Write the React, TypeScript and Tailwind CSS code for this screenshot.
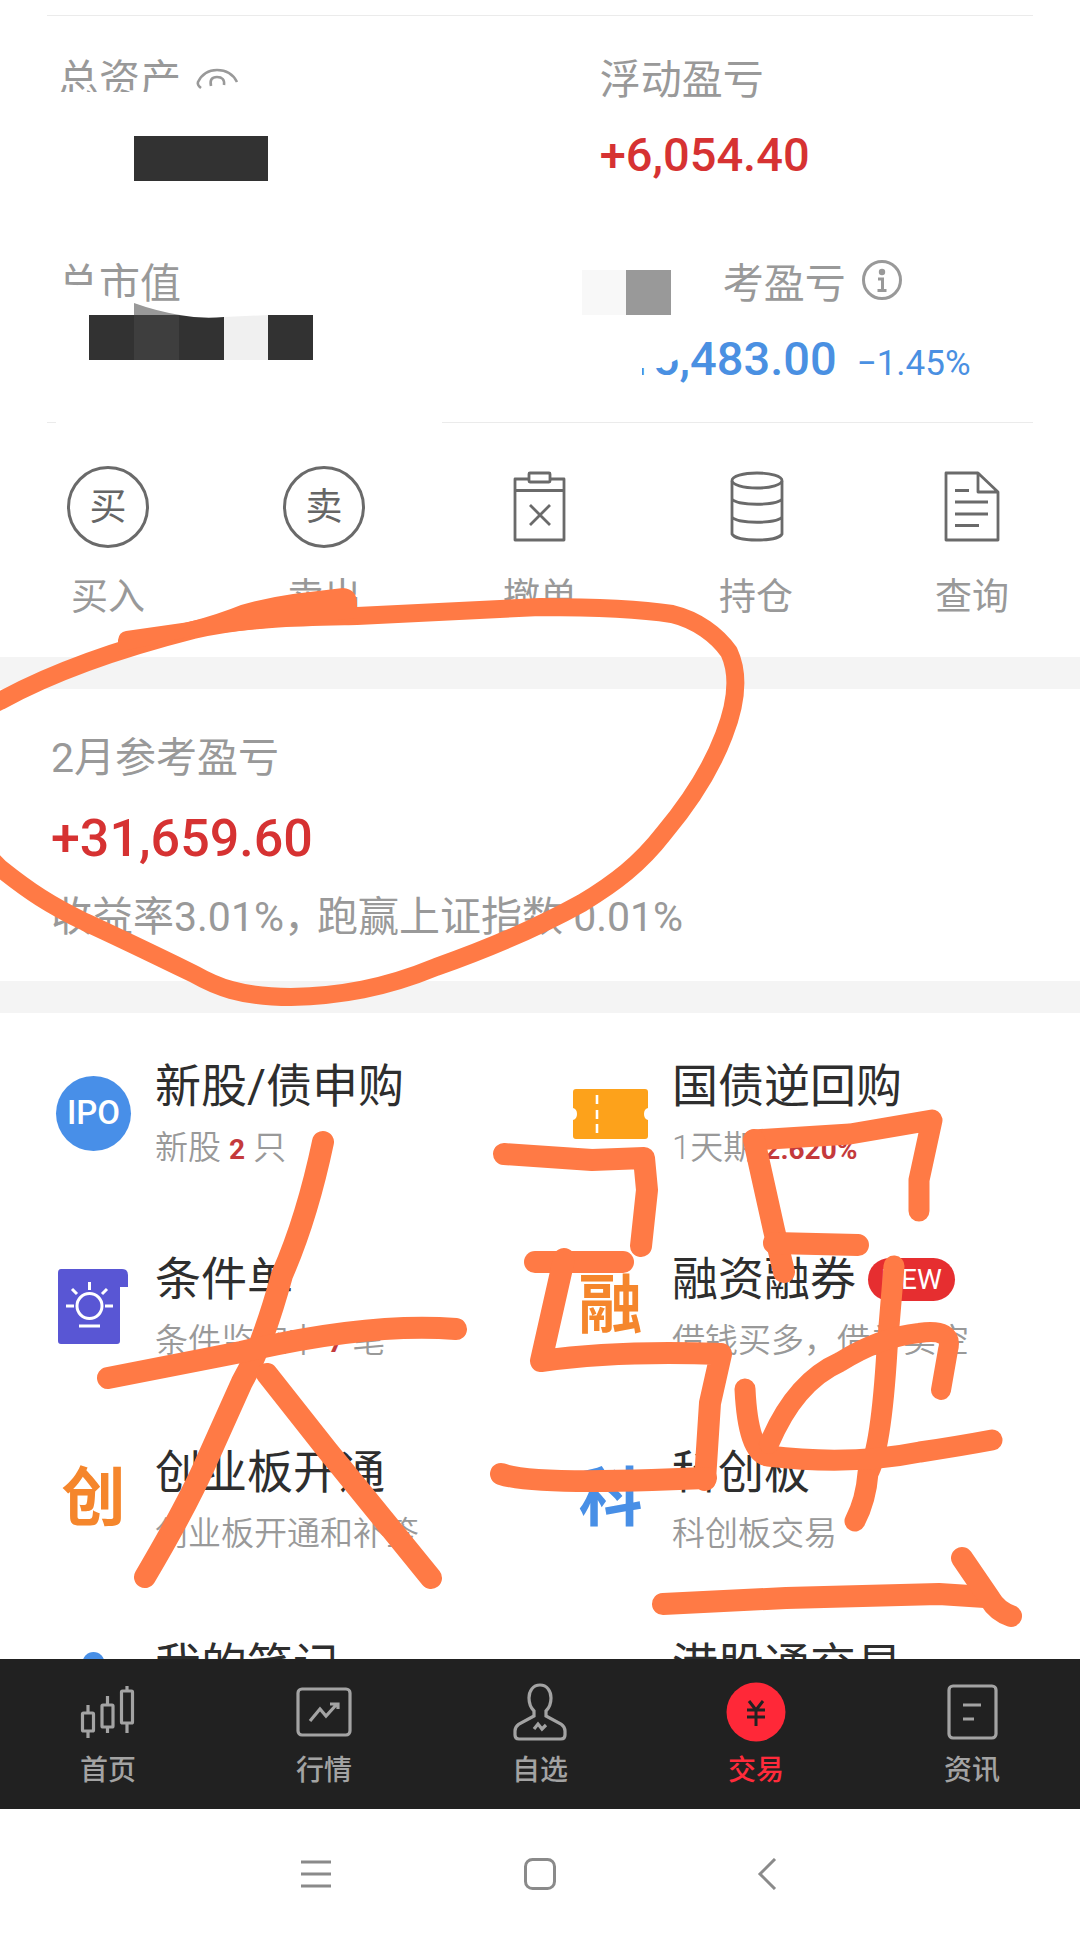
import type { ReactNode } from "react";

const BuyIcon = ({ char }: { char: string }) => (
  <span className="flex h-[82px] w-[82px] items-center justify-center rounded-full border-[3px] border-[#6a6a6a] text-[37px] leading-none text-[#666]">
    {char}
  </span>
);

const CancelIcon = () => (
  <svg className="h-[82px] w-[82px]" viewBox="0 0 82 82" fill="none" stroke="#6a6a6a" strokeWidth="2.8" strokeLinejoin="round">
    <path d="M30 13H16v61h49V13H51M16 24.500h49" />
    <rect x="30" y="7" width="21" height="9" rx="1" />
    <path d="M31 39l20 20M51 39L31 59" />
  </svg>
);

const HoldingIcon = () => (
  <svg className="h-[82px] w-[82px]" viewBox="0 0 82 82" fill="none" stroke="#6a6a6a" strokeWidth="2.8">
    <ellipse cx="42" cy="14.500" rx="25" ry="7.500" />
    <path d="M17 15v53c4 8 46 8 50 0V15M17 33c5 7 45 7 50 0M17 51c5 7 45 7 50 0" />
  </svg>
);

const QueryIcon = () => (
  <svg className="h-[82px] w-[82px]" viewBox="0 0 82 82" fill="none" stroke="#6a6a6a" strokeWidth="2.8" strokeLinejoin="round">
    <path d="M47 7H15v67h52V26zM47 7v19h20" />
    <path d="M24 24.500h14M24 36h33M24 48h33M24 59.500h24" />
  </svg>
);

const EyeIcon = () => (
  <svg className="h-6 w-11" viewBox="0 2 44 24" fill="none" stroke="#999" strokeWidth="2.6">
    <path d="M6 22q-4-3-3-6Q9 4 22 4q14 0 20 12" />
    <path d="M16 20q-2-9 6-9t7 8" />
  </svg>
);

const InfoIcon = () => (
  <svg className="h-10 w-10" viewBox="0 0 40 40" fill="none" stroke="#999" strokeWidth="3">
    <circle cx="20" cy="20" r="18.500" />
    <circle cx="20" cy="12" r="3.200" fill="#999" stroke="none" />
    <path d="M16 19h4.500v11M15.500 30.500h9" strokeWidth="3" />
  </svg>
);

const ConditionIcon = () => (
  <svg className="h-[75px] w-[75px]" viewBox="0 0 75 75" fill="none" stroke="#fff" strokeWidth="3">
    <path d="M5 0h61q6 0 6 6v12h-8v54q0 3-3 3H5q-3 0-3-3V4q0-4 3-4z" fill="#5956d4" stroke="none" />
    <circle cx="33.500" cy="37" r="12.500" />
    <path d="M33.500 13v8M10 37h8M49 37h8M16 20l5 5M51 20l-5 5M23 57h21" />
  </svg>
);

const TicketIcon = () => (
  <svg className="h-[75px] w-[75px]" viewBox="0 0 75 75">
    <path
      d="M3 13h69q3 0 3 3v16q-4 1-4 6t4 6v16q0 3-3 3H3q-3 0-3-3V44q4-1 4-6t-4-6V16q0-3 3-3z"
      fill="#fda21b"
    />
    <path d="M24 19v9M24 34v9M24 48v9" stroke="#fff" strokeWidth="2.6" />
  </svg>
);

const NoteIcon = () => (
  <svg className="h-[75px] w-[75px] overflow-visible" viewBox="0 0 75 75">
    <circle cx="37.500" cy="8" r="11" fill="#488fe6" />
    <path d="M12 66q4-38 25-38t26 38z" fill="#488fe6" />
  </svg>
);

const actions: { label: string; icon: ReactNode }[] = [
  { label: "买入", icon: <BuyIcon char="买" /> },
  { label: "卖出", icon: <BuyIcon char="卖" /> },
  { label: "撤单", icon: <CancelIcon /> },
  { label: "持仓", icon: <HoldingIcon /> },
  { label: "查询", icon: <QueryIcon /> },
];

type Feature = {
  title: string;
  desc?: ReactNode;
  icon?: ReactNode;
  isNew?: boolean;
};

const Num = ({ children }: { children: ReactNode }) => (
  <b className="text-[28px] font-bold leading-none text-[#c43a3c]">{children}</b>
);

const features: Feature[] = [
  {
    title: "新股/债申购",
    desc: <>新股 <Num>2</Num> 只</>,
    icon: (
      <span className="flex h-[75px] w-[75px] items-center justify-center rounded-full bg-[#488fe8] text-[33px] font-medium text-white">
        IPO
      </span>
    ),
  },
  {
    title: "国债逆回购",
    desc: <>1天期 <Num>2.620%</Num></>,
    icon: <TicketIcon />,
  },
  {
    title: "条件单",
    desc: <>条件监控中 <Num>7</Num> 笔</>,
    icon: <ConditionIcon />,
  },
  {
    title: "融资融券",
    desc: "借钱买多，借券卖空",
    icon: <span className="text-[64px] font-bold leading-none text-[#f5862c]">融</span>,
    isNew: true,
  },
  {
    title: "创业板开通",
    desc: "创业板开通和补签",
    icon: <span className="text-[64px] font-bold leading-none text-[#f5862c]">创</span>,
  },
  {
    title: "科创板",
    desc: "科创板交易",
    icon: <span className="text-[64px] font-bold leading-none text-[#488fe6]">科</span>,
  },
  { title: "我的笔记", icon: <NoteIcon /> },
  { title: "港股通交易" },
];

const tabs: { label: string; active?: boolean; icon: ReactNode }[] = [
  {
    label: "首页",
    icon: (
      <>
        <rect x="4.500" y="31" width="11" height="18" rx="1" />
        <rect x="24" y="23" width="11" height="22" rx="1" />
        <rect x="43.500" y="9" width="11" height="32" rx="1" />
        <path d="M10 23v8M10 49v7M29.500 14v9M29.500 45v6M49 4v5M49 41v10" />
      </>
    ),
  },
  {
    label: "行情",
    icon: (
      <>
        <rect x="4" y="7" width="52" height="46" rx="4" />
        <path d="M16 39l10-12 6 7 11-12M36 22h8v5" />
      </>
    ),
  },
  {
    label: "自选",
    icon: (
      <>
        <path d="M30 3c-7 0-11 6-11 13 0 6 2 10 5 13v5L9 42q-4 3-4 7v4q0 4 4 4h42q4 0 4-4v-4q0-4-4-7l-15-8v-5c3-3 5-7 5-13 0-7-4-13-11-13z" />
        <path d="M24 47l4-5 4 5 4-4" />
      </>
    ),
  },
  {
    label: "交易",
    active: true,
    icon: (
      <>
        <circle cx="30" cy="30" r="29.500" fill="#ff2838" stroke="none" />
        <path d="M23 19l7 9 7-9M21 28h18M21 35h18M30 28v16" stroke="#222" strokeWidth="3" />
      </>
    ),
  },
  {
    label: "资讯",
    icon: (
      <>
        <rect x="7" y="4" width="47" height="52" rx="4" />
        <path d="M21 23h18M21 37h11" />
      </>
    ),
  },
];

// Mosaic, eraser and pen strokes drawn on top of the screen.
function Markup() {
  return (
    <svg
      className="pointer-events-none absolute inset-0 h-full w-full"
      viewBox="0 0 1080 1939"
      preserveAspectRatio="none"
      fill="none"
      aria-hidden="true"
    >
      <g fill="#fff">
        <path d="M50 92h140v14H50zM55 284l38 2 8 8 12 4h28v14H55zM56 420h386v8H56z" />
        <path d="M590 335h96v21l-8 3-18 9h-18v20h-52z" />
      </g>
      <path d="M134 136h134v45H134zM89 315h45v45H89zM179 315q22 4 45 2v43h-45zM268 315h45v45h-45z" fill="#323232" />
      <path d="M134 303q22 8 46 12h-46z" fill="#999" />
      <path d="M134 315h45v45h-45z" fill="#3e3e3e" />
      <path d="M224 317l44-2v45h-44z" fill="#f0f0f0" />
      <path d="M582 270h44v45h-44z" fill="#f8f8f8" />
      <path d="M626 270h45v45h-45z" fill="#999" />

      <g stroke="#ff7a45" strokeLinecap="round" strokeLinejoin="round">
        <path
          strokeWidth="18"
          d="M-10 706L0 701C60 668 130 646 193 630C250 617 310 617 357 616L540 607C600 607 640 609 672 614C697 620 717 635 729 652C742 680 733 712 724 735C710 772 690 802 664 833C640 864 615 883 582 903C535 929 490 948 436 967C385 988 340 996 291 997C240 997 215 986 194 974C155 955 120 938 85 922C50 905 30 892 0 868L-10 858"
        />
        <path
          fill="#ff7a45"
          stroke="none"
          d="M118 652v-12q1-8 8-9l63-9q30-8 52-17 24-7 52-11l50-6q14 1 14 16v14l-164 18z"
        />
        <g strokeWidth="22">
          <path d="M323 1142Q307 1218 282 1275Q263 1345 242 1382L207 1460Q188 1504 145 1577" />
          <path d="M108 1378L241 1352Q370 1322 456 1329" />
          <path d="M267 1374L327 1450L431 1578" />
          <path d="M504 1154L592 1160L644 1158L647 1190L641 1246" />
          <path d="M535 1262L623 1262" />
          <path d="M564 1259L541 1361Q620 1350 721 1354L710 1403L705 1480" />
          <path d="M501 1474Q530 1484 652 1480L706 1478" />
          <path d="M754 1140L850 1134L932 1120L919 1180L919 1211" strokeWidth="21" />
          <path d="M754 1140L774 1230L784 1272" />
          <path d="M774 1243L858 1245" />
          <path d="M894 1266L887 1350Q881 1450 868 1473Q866 1500 855 1521" strokeWidth="21" />
          <path d="M745 1389Q748 1452 768 1456Q850 1466 920 1452Q960 1446 992 1440" strokeWidth="21" />
          <path d="M769 1444Q795 1382 840 1362Q880 1337 919 1333Q954 1328 948 1350L941 1390" strokeWidth="20" />
          <path d="M663 1604L786 1598L939 1594L985 1597" />
          <path d="M962 1558L990 1599Q997 1611 1011 1616" />
        </g>
      </g>
    </svg>
  );
}

export default function App() {
  return (
    <div className="relative flex h-screen flex-col overflow-hidden bg-white pt-[15px] font-['Roboto','Noto_Sans_CJK_SC',sans-serif] text-[#999]">
      <section className="mx-[47px] grid shrink-0 grid-cols-[5fr_4fr] gap-y-[73px] border-y border-[#ebebeb] pt-10 pb-[33px] pl-[11px] text-[41px] leading-[48px]">
        <div className="flex h-12 items-center gap-3.5">
          总资产
          <button type="button" aria-label="显示资产">
            <EyeIcon />
          </button>
        </div>
        <div>
          <div>浮动盈亏</div>
          <div className="mt-[21px] text-[47px] font-medium leading-[60px] text-[#d63232]">
            +6,054.40
          </div>
        </div>
        <div className="pt-0.5">总市值</div>
        <div className="pt-0.5">
          <div className="flex items-start gap-4 pl-[123px]">
            考盈亏
            <button type="button" aria-label="说明">
              <InfoIcon />
            </button>
          </div>
          <div className="mt-[21px] flex items-baseline gap-5 text-[47px] leading-[60px] text-[#4a90e2]">
            <span className="font-medium">−15,483.00</span>
            <span className="text-[35px] leading-10">−1.45%</span>
          </div>
        </div>
      </section>

      <section className="grid shrink-0 grid-cols-5 pt-[43px] pb-[35px]">
        {actions.map((a) => (
          <button
            key={a.label}
            type="button"
            className="flex flex-col items-center gap-[26px] text-[37px] leading-[48px]"
          >
            {a.icon}
            {a.label}
          </button>
        ))}
      </section>

      <div className="h-8 shrink-0 bg-[#f4f4f4]" />

      <section className="shrink-0 px-[51px] pt-[45px] pb-10 text-[41px] leading-[48px]">
        <div>2月参考盈亏</div>
        <div className="mt-[27px] text-[52px] font-medium leading-[60px] text-[#d63232]">
          +31,659.60
        </div>
        <div className="mt-6 flex whitespace-nowrap">
          <span className="w-[266px]">收益率3.01%，</span>
          <span>跑赢上证指数 0.01%</span>
        </div>
      </section>

      <div className="h-8 shrink-0 bg-[#f4f4f4]" />

      <section className="grid min-h-0 flex-1 grid-cols-2 content-start gap-x-10 gap-y-[83px] overflow-hidden pt-[45px] pr-[30px] pl-14">
        {features.map((f) => (
          <a key={f.title} href="#" className="flex items-center gap-6 whitespace-nowrap">
            <span className="flex h-[75px] w-[75px] shrink-0 items-center justify-center">
              {f.icon}
            </span>
            <span className="flex h-[110px] flex-col gap-3.5">
              <span className="flex items-center gap-3 text-[46px] leading-[56px] text-[#2e2e2e]">
                {f.title}
                {f.isNew && (
                  <span className="rounded-full bg-[#e62e30] px-[13px] text-[28px] leading-[43px] text-white">
                    NEW
                  </span>
                )}
              </span>
              {f.desc && (
                <span className="text-[33px] font-[350] leading-10">{f.desc}</span>
              )}
            </span>
          </a>
        ))}
      </section>

      <nav className="grid shrink-0 grid-cols-5 bg-[#212121] pt-[23px] pb-5">
        {tabs.map((t) => (
          <button
            key={t.label}
            type="button"
            className={`flex flex-col items-center gap-[11px] text-[28px] font-medium leading-9 ${
              t.active ? "text-[#ff2b3b]" : "text-[#a3a3a3]"
            }`}
          >
            <svg
              className="h-[60px] w-[60px]"
              viewBox="0 0 60 60"
              fill="none"
              stroke="currentColor"
              strokeWidth="3.2"
            >
              {t.icon}
            </svg>
            {t.label}
          </button>
        ))}
      </nav>

      <div className="flex h-[130px] shrink-0 items-center justify-center gap-48">
        <button type="button" aria-label="最近任务">
          <svg className="h-8 w-8" viewBox="0 0 32 32" fill="none" stroke="#8a8a8a" strokeWidth="3">
            <path d="M1 4h30M1 16h30M1 28h30" />
          </svg>
        </button>
        <button type="button" aria-label="主屏幕">
          <svg className="h-8 w-8" viewBox="0 0 32 32" fill="none" stroke="#8a8a8a" strokeWidth="3">
            <rect x="1.500" y="1.500" width="29" height="29" rx="7" />
          </svg>
        </button>
        <button type="button" aria-label="返回">
          <svg className="h-8 w-8" viewBox="0 0 32 32" fill="none" stroke="#8a8a8a" strokeWidth="3">
            <path d="M27 1L12 16l15 15" />
          </svg>
        </button>
      </div>

      <Markup />
    </div>
  );
}
